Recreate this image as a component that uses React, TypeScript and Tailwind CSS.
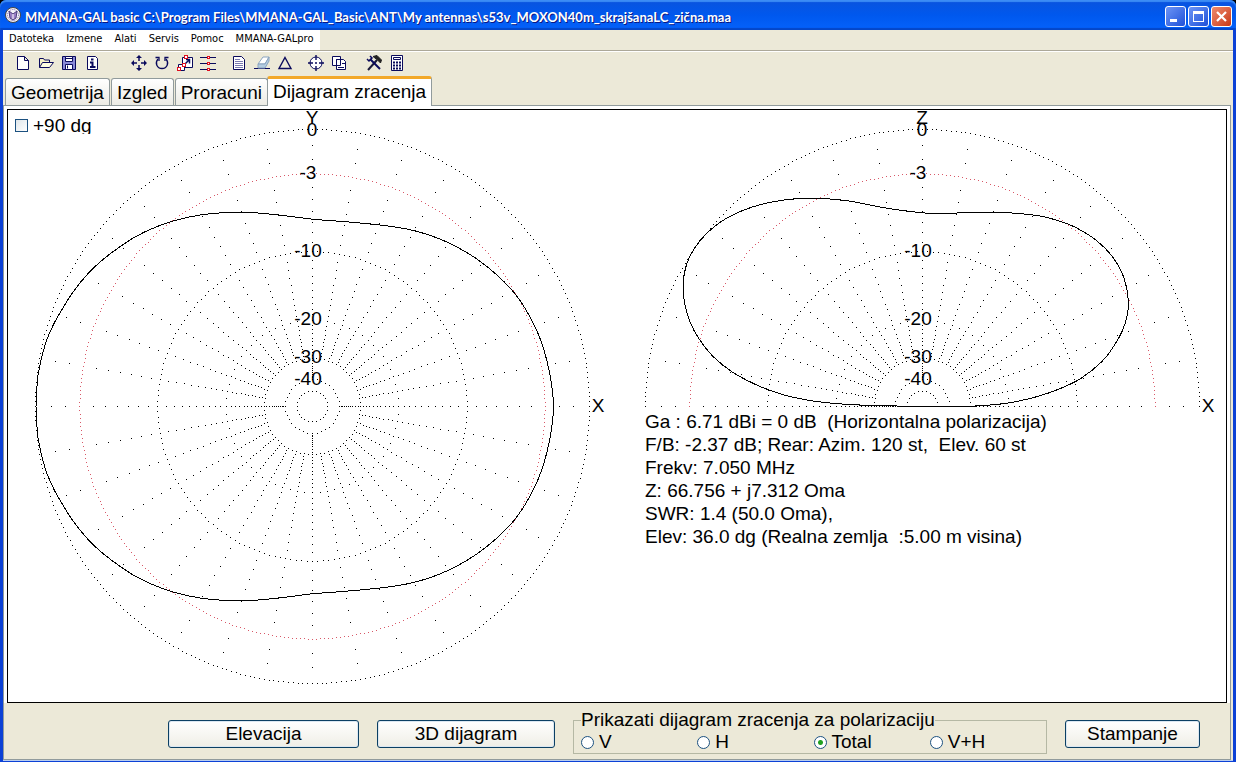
import React, { useState } from 'react';

type Point = [number, number];

const RADIUS = 277;
const INK = '#0a0a5c';

// Points are relative to the plot centre, y grows upwards
const azimuthUpper: Point[] = [
  [-276.5, 0], [-276, 9.8], [-274.2, 33.2], [-267.5, 61.5], [-259.2, 81.5], [-250.8, 96.5],
  [-239.2, 114.8], [-224.2, 133.2], [-209.2, 147.2], [-192.5, 159.8], [-175.8, 170.5],
  [-155.8, 179.8], [-135.8, 186.5], [-112.5, 191.5], [-89.2, 193.8], [-72, 194.2],
  [-55.8, 193.6], [-34.2, 191.5], [-15.8, 189.3], [0.8, 187.2], [32.5, 184.8], [67.5, 181.5],
  [90.5, 178.2], [104.2, 175.2], [120.8, 170], [137.5, 163], [154.2, 154], [168.5, 144.5],
  [185, 131], [200.8, 114.8], [212.8, 97.8], [222.5, 79.8], [229, 64], [234.2, 46.5],
  [237.8, 29.8], [240.2, 13.2], [241, 0],
];

const azimuth: Point[] = [
  ...azimuthUpper,
  ...azimuthUpper.slice(1, -1).reverse().map(([x, y]): Point => [x, -y]),
];

const elevation: Point[] = [
  [0, 0], [-29.5, 0.6], [-66, 1.6], [-89.2, 3.2], [-109.2, 5.5], [-129.2, 9.2], [-145.8, 13.8],
  [-165.8, 21.5], [-189.2, 33.8], [-209.2, 49.8], [-224.2, 68.8], [-232.5, 84.8],
  [-237.5, 101.5], [-239.2, 116], [-238.2, 133.2], [-232.8, 149.8], [-222, 166.5],
  [-205.8, 181.8], [-186.8, 193], [-169.2, 199.8], [-149.2, 204.8], [-125.8, 207.8],
  [-100.8, 208], [-75.8, 205.8], [-52.5, 201.5], [-32.5, 197.8], [0.8, 193.6], [25.5, 193.4],
  [52.5, 193.8], [67.5, 194.2], [90.8, 193.4], [117.5, 190.5], [137.5, 185.2], [154.2, 178.5],
  [174.2, 165.8], [189.2, 150.8], [199.2, 134.2], [204.2, 118.2], [205.8, 104.8], [204.8, 91.5],
  [200.2, 76.5], [191.2, 60.2], [179.2, 44.8], [158.5, 28.2], [137.5, 17.8], [114.2, 9.8],
  [87.5, 3.8], [67.5, 1.5], [50.5, 0.4],
];

const rings = [
  { db: 0, step: 1 },
  { db: 3, step: 1 },
  { db: 10, step: 2 },
  { db: 20, step: 5 },
  { db: 30, step: 5 },
  { db: 40, step: 10 },
  { db: 50, step: 15 },
];

const dbLabels = [
  { text: '0', dx: 0, y: 26 },
  { text: '-3', dx: -4, y: 69 },
  { text: '-10', dx: -4, y: 147 },
  { text: '-20', dx: -4, y: 215 },
  { text: '-30', dx: -4, y: 253 },
  { text: '-40', dx: -4, y: 275 },
];

const toRadius = (db: number) => RADIUS * Math.pow(0.89, db / 2);

const dot = (cx: number, cy: number, r: number, deg: number) => {
  const a = (deg * Math.PI) / 180;
  const x = Math.round(cx + r * Math.cos(a));
  const y = Math.round(cy - r * Math.sin(a));
  return `M${x} ${y}h1v1h-1z`;
};

const ringPath = (cx: number, cy: number, db: number, step: number, sweep: number) => {
  let d = '';
  for (let deg = 0; deg <= sweep; deg += step) d += dot(cx, cy, toRadius(db), deg);
  return d;
};

const spokePath = (cx: number, cy: number, sweep: number) => {
  let d = '';
  for (let deg = 0; deg <= sweep; deg += 10) {
    const last = deg % 90 === 0 ? 40 : 30;
    for (let db = 1; db <= last; db++) d += dot(cx, cy, toRadius(db), deg);
  }
  return d;
};

// Closed Catmull-Rom spline through all points
const curvePath = (points: Point[], cx: number, cy: number) => {
  const n = points.length;
  const at = (i: number): Point => {
    const [x, y] = points[(i + n) % n];
    return [cx + 0.5 + x, cy + 0.5 - y];
  };
  let d = `M${at(0).join(' ')}`;
  for (let i = 0; i < n; i++) {
    const [p0, p1, p2, p3] = [at(i - 1), at(i), at(i + 1), at(i + 2)];
    d += `C${p1[0] + (p2[0] - p0[0]) / 6} ${p1[1] + (p2[1] - p0[1]) / 6}`;
    d += ` ${p2[0] - (p3[0] - p1[0]) / 6} ${p2[1] - (p3[1] - p1[1]) / 6} ${p2[0]} ${p2[1]}`;
  }
  return d + 'Z';
};

interface PolarPlotProps {
  axis: string;
  points: Point[];
  sweep: number;
  height: number;
}

const PolarPlot: React.FC<PolarPlotProps> = ({ axis, points, sweep, height }) => {
  const cx = 304;
  const cy = 296;
  return (
    <svg width={610} height={height} className="block shrink-0 overflow-visible" role="img" aria-label={axis}>
      <g shapeRendering="crispEdges">
        <path d={spokePath(cx, cy, sweep)} fill="#000" />
        {rings.map(ring => (
          <path key={ring.db} d={ringPath(cx, cy, ring.db, ring.step, sweep)} fill={ring.db === 3 ? '#d85868' : '#000'} />
        ))}
        <path d={curvePath(points, cx, cy)} fill="none" stroke="#000" strokeWidth="1" />
      </g>
      <g fontFamily="Liberation Sans, Arial, sans-serif" fontSize="19" textAnchor="middle">
        <text x={cx} y={14}>{axis}</text>
        {dbLabels.map(label => (
          <text key={label.text} x={cx + label.dx} y={label.y}>{label.text}</text>
        ))}
        <text x={cx + 286} y={302}>X</text>
      </g>
    </svg>
  );
};

const toolGroups: { className: string; tools: { name: string; icon: React.ReactNode }[] }[] = [
  {
    className: 'ml-2',
    tools: [
      { name: 'New', icon: <path d="M2.5 1.5h7l4 4v9h-11zM9.5 1.5v4h4" fill="#fff" /> },
      {
        name: 'Open',
        icon: (
          <>
            <path d="M1.5 12.5v-9h4l1 1.5h5v2.5" fill="#f7f2c8" />
            <path d="M1.5 12.5l3-5h11l-4 5z" fill="#fffde0" />
          </>
        ),
      },
      {
        name: 'Save',
        icon: (
          <>
            <path d="M1.5 1.5h13v13h-13z" fill="#8a8ad8" />
            <path d="M4.5 1.5h7v5h-7zM4.5 9.5h7v5h-7z" fill="#fff" />
            <path d="M6.5 10.5v3M5 3.5h6" />
          </>
        ),
      },
      {
        name: 'Info',
        icon: (
          <>
            <path d="M3.5 1.5h8l2 2v11h-10z" fill="#fff" />
            <path d="M7 4.5h2.5M6 7.5h2.5v4M6 12h5.5" strokeWidth="2" />
          </>
        ),
      },
    ],
  },
  {
    className: 'ml-6',
    tools: [
      {
        name: 'Move',
        icon: (
          <>
            <path d="M8 1v5M8 10v5M1 8h5M10 8h5" strokeWidth="1.5" />
            <path d="M8 0l3 3H5zM8 16l3-3H5zM0 8l3-3v6zM16 8l-3-3v6z" fill={INK} stroke="none" />
          </>
        ),
      },
      {
        name: 'Rotate',
        icon: (
          <>
            <path d="M4 4C.5 8 3 13.5 8 13.5S15.5 8 12 4" strokeWidth="1.3" />
            <path d="M1.5 2.5h3.500v3.500M14.500 2.500h-3.500v3.500" strokeWidth="1.300" />
          </>
        ),
      },
      {
        name: 'Scale',
        icon: (
          <>
            <path d="M5.5 2.5h10v10h-10z" fill="#fff" />
            <path d="M1.5 9.5h6v6h-6z" fill="#fff" />
            <path d="M8 9l4-4M9 4.5h3.5v4" strokeWidth="1.5" />
            <g fill="#fff" stroke="#e01020">
              <rect x="7.5" y="0.5" width="3" height="3" />
              <rect x="0.5" y="12.5" width="3" height="3" />
              <rect x="5.5" y="8.5" width="3" height="3" />
            </g>
          </>
        ),
      },
      {
        name: 'Segments',
        icon: (
          <>
            <path d="M0 2.5h16M0 8.5h16M0 14.5h16" />
            <g fill="#fff" stroke="#e01020">
              <rect x="7.5" y="1.5" width="2" height="2" />
              <rect x="7.5" y="7.5" width="2" height="2" />
              <rect x="7.5" y="13.5" width="2" height="2" />
            </g>
          </>
        ),
      },
    ],
  },
  {
    className: 'ml-2',
    tools: [
      {
        name: 'Comment',
        icon: (
          <>
            <path d="M2.5 1.5h8l3 3v10h-11z" fill="#fff" />
            <path d="M4 4.5h5M4 6.5h8M4 8.5h8M4 10.5h8M4 12.5h8" stroke="#7a7ab0" />
          </>
        ),
      },
      {
        name: 'Erase',
        icon: (
          <>
            <path d="M0 13.5h16" />
            <path d="M4 9l5-7h6l-4 7z" fill="#fff" stroke="#8aa4c0" />
            <path d="M4 9h7l4-7v4l-4 7H4z" fill="#b4cce0" stroke="#8aa4c0" />
          </>
        ),
      },
      { name: 'Triangle', icon: <path d="M8 2.5l6 11H2z" strokeWidth="1.4" /> },
    ],
  },
  {
    className: 'ml-2',
    tools: [
      {
        name: 'Target',
        icon: (
          <>
            <circle cx="8" cy="8" r="6" fill="#fff" />
            <path d="M8 0v5M8 11v5M0 8h5M11 8h5M7 8h2" strokeWidth="1.4" />
          </>
        ),
      },
      {
        name: 'Copy',
        icon: (
          <>
            <path d="M1.5 1.5h8v9h-8z" fill="#fff" />
            <path d="M5.5 4.5h7l2 2v8h-9z" fill="#fff" />
            <path d="M5.5 4.5h4v6h-4zM11 8.5h3M7 12.5h6" />
          </>
        ),
      },
    ],
  },
  {
    className: 'ml-3',
    tools: [
      {
        name: 'Tools',
        icon: (
          <>
            <path d="M2 15L11 5" stroke="#1a1a3a" strokeWidth="2" />
            <path d="M7 1.5l4-1 4.5 4.5-1 3-3-3z" fill="#222" stroke="#222" />
            <path d="M4 4l10 10" strokeWidth="2" />
            <path d="M1 4l2 2 3-3-2-2" strokeWidth="1.5" />
          </>
        ),
      },
      {
        name: 'Calculator',
        icon: (
          <>
            <path d="M2.5 0.5h11v15h-11z" fill="#fff" />
            <path d="M4.5 2.5h7v2h-7z" fill="#fff" />
            <path d="M4 7.5h8M4 10.5h8M4 13.5h8" strokeWidth="2" strokeDasharray="2 1" />
          </>
        ),
      },
    ],
  },
];

const menuItems = ['Datoteka', 'Izmene', 'Alati', 'Servis', 'Pomoc', 'MMANA-GALpro'];
const tabs = ['Geometrija', 'Izgled', 'Proracuni', 'Dijagram zracenja'];
const polarizations = ['V', 'H', 'Total', 'V+H'];

const results = [
  'Ga : 6.71 dBi = 0 dB  (Horizontalna polarizacija)',
  'F/B: -2.37 dB; Rear: Azim. 120 st,  Elev. 60 st',
  'Frekv: 7.050 MHz',
  'Z: 66.756 + j7.312 Oma',
  'SWR: 1.4 (50.0 Oma),',
  'Elev: 36.0 dg (Realna zemlja  :5.00 m visina)',
];

const PushButton: React.FC<{ className: string; children: React.ReactNode }> = ({ className, children }) => (
  <button
    className={`mt-[17px] h-7 shrink-0 rounded-[3px] border border-[#0b3f63] bg-gradient-to-b from-white to-[#efeee6] leading-[26px] shadow-[inset_0_0_0_1px_#dbe7f1] ${className}`}
  >
    {children}
  </button>
);

const TitleBar: React.FC = () => (
  <header className="flex h-[30px] items-center gap-1 rounded-t-md bg-gradient-to-b from-[#0a53dd] via-[#0058ee] to-[#0562fb] pl-[5px] pr-1 shadow-[inset_0_2px_1px_#3c8cf5,inset_0_-2px_1px_#0446c8]">
    <svg width="16" height="16" viewBox="0 0 16 16" aria-hidden="true">
      <circle cx="8" cy="8" r="7.5" fill="#f5f2fa" stroke="#444" strokeWidth="1" />
      <circle cx="8" cy="8" r="5.5" fill="none" stroke="#7a6aa8" strokeDasharray="1 1" />
      <path d="M4 4l4 3 4-3-1 7-3 2-3-2z" fill="#9a7fc6" stroke="#4b3c7a" />
      <path d="M8 7v5" stroke="#fff" />
    </svg>
    <h1 className="flex-1 whitespace-nowrap pt-1 font-['Lato',sans-serif] text-[13px] font-bold leading-5 text-white [text-shadow:1px_1px_#0a1883]">
      MMANA-GAL basic C:\Program Files\MMANA-GAL_Basic\ANT\My antennas\s53v_MOXON40m_skrajšanaLC_zična.maa
    </h1>
    <div className="flex gap-[2px] pt-[3px]">
      <button aria-label="Minimize" className="h-[21px] w-[21px] rounded-[3px] border border-white bg-gradient-to-br from-[#6d94f5] to-[#1f4fd8]">
        <svg width="19" height="19"><path d="M4 12h7v3H4z" fill="#fff" /></svg>
      </button>
      <button aria-label="Maximize" className="h-[21px] w-[21px] rounded-[3px] border border-white bg-gradient-to-br from-[#6d94f5] to-[#1f4fd8]">
        <svg width="19" height="19"><path d="M4 4h11v11H4zM5 7v7h9V7z" fill="#fff" fillRule="evenodd" /></svg>
      </button>
      <button aria-label="Close" className="h-[21px] w-[21px] rounded-[3px] border border-white bg-gradient-to-br from-[#ee8a6c] to-[#c8350f]">
        <svg width="19" height="19"><path d="M5 5l9 9M14 5l-9 9" stroke="#fff" strokeWidth="2.2" /></svg>
      </button>
    </div>
  </header>
);

const App: React.FC = () => {
  const [activeTab, setActiveTab] = useState('Dijagram zracenja');
  const [polarization, setPolarization] = useState('Total');
  const [rotated, setRotated] = useState(false);

  return (
    <div className="flex min-h-screen flex-col bg-black font-['Liberation_Sans',Arial,sans-serif] text-[19px] leading-[23px] text-black">
      <TitleBar />
      <div className="flex flex-1 flex-col border-x-[3px] border-b border-[#0c41d6] bg-[#ece9d8]">
        <nav className="flex h-5 font-['DejaVu_Sans_Condensed','Noto_Sans',sans-serif] text-[11px] leading-[18px]">
          <div className="flex bg-white pr-px">
            {menuItems.map(item => (
              <button key={item} className="px-[6px] pb-[2px]">{item}</button>
            ))}
          </div>
        </nav>

        <div className="flex h-[26px] border-t border-[#aca899] shadow-[inset_0_1px_#fff]">
          {toolGroups.map((group, i) => (
            <div key={i} className={`flex ${group.className}`}>
              {group.tools.map(tool => (
                <button key={tool.name} aria-label={tool.name} className="flex h-6 w-[23px] items-center justify-center">
                  <svg width="16" height="16" viewBox="0 0 16 16" fill="none" stroke={INK}>{tool.icon}</svg>
                </button>
              ))}
            </div>
          ))}
        </div>

        <div role="tablist" className="flex items-end pl-[2px]">
          {tabs.map(tab => (
            <button
              key={tab}
              role="tab"
              aria-selected={tab === activeTab}
              onClick={() => setActiveTab(tab)}
              className={
                tab === activeTab
                  ? 'relative -mb-px -ml-[2px] h-[30px] rounded-t-[3px] border-x border-t-[3px] border-x-[#919b9c] border-t-[#f2a829] bg-white px-[5px] pb-[3px]'
                  : 'mr-px h-[27px] rounded-t-[3px] border border-b-0 border-[#919b9c] bg-gradient-to-b from-white to-[#ecebe4] px-[5px]'
              }
            >
              {tab}
            </button>
          ))}
        </div>

        <main className="mr-[2px] flex flex-1 flex-col border border-[#919b9c] bg-white">
          <section className="relative mx-[3px] mt-[3px] flex flex-1 border border-black">
            <PolarPlot axis="Y" points={azimuth} sweep={360} height={592} />
            <div className="flex-1">
              <PolarPlot axis="Z" points={elevation} sweep={180} height={300} />
              <div className="ml-[27px] whitespace-pre">
                {results.map(line => (
                  <p key={line}>{line}</p>
                ))}
              </div>
            </div>
            <label className="absolute left-[7px] top-[7px] flex h-[17px] items-center gap-[5px] overflow-hidden">
              <input
                type="checkbox"
                checked={rotated}
                onChange={e => setRotated(e.target.checked)}
                className="h-[13px] w-[13px] appearance-none border border-[#1c5180] bg-gradient-to-br from-[#dfe6ea] to-white checked:bg-[#21a121]"
              />
              +90 dg
            </label>
          </section>

          <footer className="flex h-14 items-start gap-[18px] bg-[#ece9d8] pl-[164px]">
            <PushButton className="w-[191px]">Elevacija</PushButton>
            <PushButton className="w-[178px]">3D dijagram</PushButton>
            <fieldset className="mt-[6px] w-[474px] shrink-0 border border-[#b5b8a4] pl-[7px]">
              <legend className="leading-[22px]">Prikazati dijagram zracenja za polarizaciju</legend>
              <div className="grid grid-cols-4">
                {polarizations.map(name => (
                  <label key={name} className="flex items-center gap-[5px] leading-[22px]">
                    <input
                      type="radio"
                      name="polarization"
                      checked={polarization === name}
                      onChange={() => setPolarization(name)}
                      className="h-[13px] w-[13px] appearance-none rounded-full border border-[#1c5180] bg-white checked:bg-[radial-gradient(circle,#21a121_0,#21a121_2px,#fff_3px)]"
                    />
                    {name}
                  </label>
                ))}
              </div>
            </fieldset>
            <PushButton className="w-[135px]">Stampanje</PushButton>
          </footer>
        </main>
        <div className="h-px bg-[#b9cdf0]" />
      </div>
    </div>
  );
};

export default App;
